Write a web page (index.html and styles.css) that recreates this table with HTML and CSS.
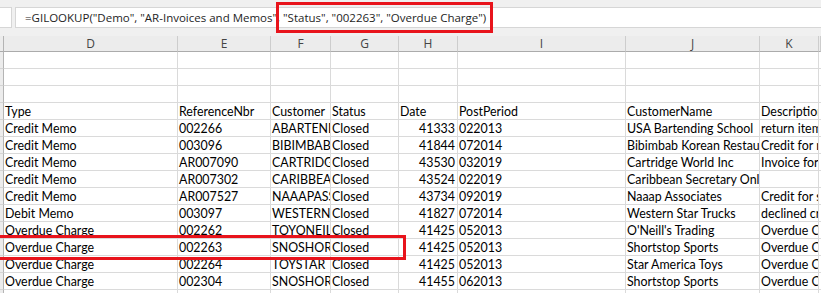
FILE: index.html
```html
<!DOCTYPE html>
<html lang="en">

<head>
    <meta charset="UTF-8">
    <meta name="viewport" content="width=device-width, initial-scale=1.0">
    <title>AR Invoices and Memos</title>
    <link rel="stylesheet" href="styles.css">
</head>

<body>
    <!-- Formula bar -->
    <div class="formula-bar">
        <div class="name-box"></div>
        <div class="formula-input">=GILOOKUP("Demo", "AR-Invoices and Memos", "Status", "002263", "Overdue Charge")</div>
    </div>

    <!-- Worksheet grid -->
    <div class="sheet">
        <div class="row col-heads">
            <div class="rh"></div>
            <div class="ch">D</div><div class="ch">E</div><div class="ch">F</div><div class="ch">G</div>
            <div class="ch">H</div><div class="ch">I</div><div class="ch">J</div><div class="ch">K</div><div class="ch"></div>
        </div>
        <div class="row">
            <div class="rh"></div>
            <div class="cell"></div><div class="cell"></div><div class="cell"></div><div class="cell"></div>
            <div class="cell"></div><div class="cell"></div><div class="cell"></div><div class="cell"></div><div class="cell"></div>
        </div>
        <div class="row">
            <div class="rh"></div>
            <div class="cell"></div><div class="cell"></div><div class="cell"></div><div class="cell"></div>
            <div class="cell"></div><div class="cell"></div><div class="cell"></div><div class="cell"></div><div class="cell"></div>
        </div>
        <div class="row">
            <div class="rh"></div>
            <div class="cell"></div><div class="cell"></div><div class="cell"></div><div class="cell"></div>
            <div class="cell"></div><div class="cell"></div><div class="cell"></div><div class="cell"></div><div class="cell"></div>
        </div>
        <div class="row">
            <div class="rh"></div>
            <div class="cell">Type</div><div class="cell">ReferenceNbr</div><div class="cell">Customer</div><div class="cell">Status</div>
            <div class="cell">Date</div><div class="cell">PostPeriod</div><div class="cell">CustomerName</div><div class="cell">Description</div><div class="cell"></div>
        </div>
        <div class="row">
            <div class="rh"></div>
            <div class="cell">Credit Memo</div><div class="cell">002266</div><div class="cell">ABARTENDER</div><div class="cell">Closed</div>
            <div class="cell num">41333</div><div class="cell">022013</div><div class="cell">USA Bartending School</div><div class="cell">return item</div><div class="cell"></div>
        </div>
        <div class="row">
            <div class="rh"></div>
            <div class="cell">Credit Memo</div><div class="cell">003096</div><div class="cell">BIBIMBAB</div><div class="cell">Closed</div>
            <div class="cell num">41844</div><div class="cell">072014</div><div class="cell">Bibimbab Korean Restaurant</div><div class="cell">Credit for return</div><div class="cell"></div>
        </div>
        <div class="row">
            <div class="rh"></div>
            <div class="cell">Credit Memo</div><div class="cell">AR007090</div><div class="cell">CARTRIDGEWO</div><div class="cell">Closed</div>
            <div class="cell num">43530</div><div class="cell">032019</div><div class="cell">Cartridge World Inc</div><div class="cell">Invoice for</div><div class="cell"></div>
        </div>
        <div class="row">
            <div class="rh"></div>
            <div class="cell">Credit Memo</div><div class="cell">AR007302</div><div class="cell">CARIBBEAN</div><div class="cell">Closed</div>
            <div class="cell num">43524</div><div class="cell">022019</div><div class="cell">Caribbean Secretary Online</div><div class="cell"></div><div class="cell"></div>
        </div>
        <div class="row">
            <div class="rh"></div>
            <div class="cell">Credit Memo</div><div class="cell">AR007527</div><div class="cell">NAAAPASS</div><div class="cell">Closed</div>
            <div class="cell num">43734</div><div class="cell">092019</div><div class="cell">Naaap Associates</div><div class="cell">Credit for service</div><div class="cell"></div>
        </div>
        <div class="row">
            <div class="rh"></div>
            <div class="cell">Debit Memo</div><div class="cell">003097</div><div class="cell">WESTERNTRUCK</div><div class="cell">Closed</div>
            <div class="cell num">41827</div><div class="cell">072014</div><div class="cell">Western Star Trucks</div><div class="cell">declined credit</div><div class="cell"></div>
        </div>
        <div class="row">
            <div class="rh"></div>
            <div class="cell">Overdue Charge</div><div class="cell">002262</div><div class="cell">TOYONEILL</div><div class="cell">Closed</div>
            <div class="cell num">41425</div><div class="cell">052013</div><div class="cell">O'Neill's Trading</div><div class="cell">Overdue Charge</div><div class="cell"></div>
        </div>
        <div class="row">
            <div class="rh"></div>
            <div class="cell">Overdue Charge</div><div class="cell">002263</div><div class="cell">SNOSHORT</div><div class="cell">Closed</div>
            <div class="cell num">41425</div><div class="cell">052013</div><div class="cell">Shortstop Sports</div><div class="cell">Overdue Charge</div><div class="cell"></div>
        </div>
        <div class="row">
            <div class="rh"></div>
            <div class="cell">Overdue Charge</div><div class="cell">002264</div><div class="cell">TOYSTAR</div><div class="cell">Closed</div>
            <div class="cell num">41425</div><div class="cell">052013</div><div class="cell">Star America Toys</div><div class="cell">Overdue Charge</div><div class="cell"></div>
        </div>
        <div class="row">
            <div class="rh"></div>
            <div class="cell">Overdue Charge</div><div class="cell">002304</div><div class="cell">SNOSHORT</div><div class="cell">Closed</div>
            <div class="cell num">41455</div><div class="cell">062013</div><div class="cell">Shortstop Sports</div><div class="cell">Overdue Charge</div><div class="cell"></div>
        </div>
        <div class="row">
            <div class="rh"></div>
            <div class="cell"></div><div class="cell"></div><div class="cell"></div><div class="cell"></div>
            <div class="cell"></div><div class="cell"></div><div class="cell"></div><div class="cell"></div><div class="cell"></div>
        </div>
    </div>

    <!-- red callouts drawn over the sheet -->
    <div class="callout callout-args"></div>
    <div class="callout callout-row"></div>
</body>

</html>
```

FILE: styles.css
```css
body {
    margin: 0;
    width: 821px;
    height: 293px;
    overflow: hidden;
    position: relative;
    background-color: white;
}
.formula-bar {
    display: flex;
    height: 36px;
    padding-top: 7px;
    box-sizing: border-box;
    background-color: #f0f0f0;
}
.name-box {
    width: 11px;
    height: 19px;
    background-color: white;
    border: 1px solid #d6d6d6;
    border-left: none;
}
.formula-input {
    flex: 1;
    height: 19px;
    margin-left: 3px;
    padding-left: 9px;
    background-color: white;
    border: 1px solid #d6d6d6;
    border-right: none;
    font-family: "Open Sans", sans-serif;
    font-size: 11.5px;
    line-height: 19px;
    color: #1e1e1e;
    white-space: nowrap;
    overflow: hidden;
}
.row {
    display: grid;
    grid-template-columns: 4px 174px 93px 60px 68px 59px 168px 134px 59px 1fr;
    height: 17px;
}
.col-heads {
    height: 16px;
    background-color: #ececec;
}
.rh {
    background-color: #ececec;
    border-right: 1px solid #b4b4b4;
    border-bottom: 1px solid #d4d4d4;
}
.col-heads .rh {
    border-bottom: 1px solid #ababab;
}
.ch {
    border-right: 1px solid #cdcdcd;
    border-bottom: 1px solid #ababab;
    text-align: center;
    font-family: "Open Sans", sans-serif;
    font-size: 12px;
    line-height: 15px;
    color: #444444;
}
.cell {
    display: flex;
    align-items: flex-end;
    padding: 0 2px 0 1px;
    border-right: 1px solid #dadada;
    border-bottom: 1px solid #dadada;
    font-family: Lato, sans-serif;
    font-size: 12.4px;
    line-height: 15px;
    color: black;
    white-space: nowrap;
    overflow: hidden;
}
.num {
    justify-content: flex-end;
}
.callout {
    position: absolute;
    border: 3px solid #e8141c;
    box-sizing: border-box;
}
.callout-args {
    left: 276px;
    top: 2px;
    width: 217px;
    height: 31px;
}
.callout-row {
    left: -10px;
    top: 235px;
    width: 416px;
    height: 25px;
}
```
